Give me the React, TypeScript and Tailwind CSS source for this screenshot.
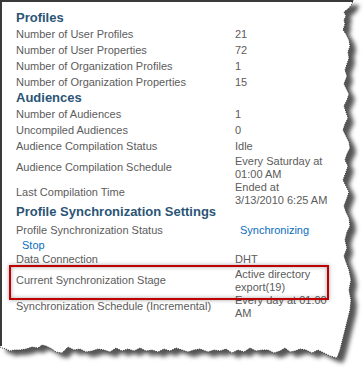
import React from "react";

const rightEdge: [number, number][] = [
  [353, 0], [352, 4], [349, 8], [344, 12], [346, 16], [344, 20], [345, 24], [343, 30], [346, 34], [349, 40], [350, 46], [348, 52], [349, 58], [347, 64], [345, 70], [347, 76], [344, 84], [346, 88], [349, 94], [347, 100], [344, 106], [346, 112], [348, 118], [345, 124], [343, 130], [346, 136], [349, 142], [350, 148], [347, 154], [345, 160], [348, 166], [346, 172], [343, 180], [346, 186], [349, 192], [347, 198], [344, 206], [346, 212], [349, 218], [350, 226], [347, 232], [345, 240], [347, 248], [344, 256], [346, 262], [349, 270], [351, 280], [349, 290], [351, 300], [350, 310], [348, 318], [346, 326], [344, 334], [342, 342], [340, 350], [337, 358],
];
const bottomEdge: [number, number][] = [
  [330, 356], [322, 352], [318, 350], [312, 353], [306, 350], [300, 349], [295, 351], [290, 352], [285, 348], [280, 351], [274, 353], [268, 350], [262, 350], [256, 351], [250, 348], [244, 352], [238, 350], [232, 353], [226, 349], [220, 351], [214, 350], [208, 352], [200, 349], [194, 350], [188, 352], [182, 350], [176, 348], [170, 351], [164, 349], [158, 352], [152, 350], [146, 351], [140, 348], [134, 351], [128, 349], [122, 351], [116, 348], [110, 352], [104, 350], [98, 349], [92, 351], [86, 352], [80, 349], [74, 350], [68, 347], [62, 353], [56, 352], [52, 349], [46, 346], [42, 345], [38, 348], [32, 347], [26, 349], [20, 350], [14, 350], [10, 351], [6, 349], [2, 348], [0, 347],
];

const pts = (a: [number, number][]) => a.map(([x, y]) => `${x},${y}`).join(" ");
const paper = `0,0 ${pts(rightEdge)} ${pts(bottomEdge)}`;
const torn = `${pts(rightEdge)} ${pts(bottomEdge)}`;

function Paper() {
  return (
    <svg className="absolute inset-0 z-0" width="364" height="368" viewBox="0 0 364 368">
      <defs>
        <filter id="blur" x="-10%" y="-10%" width="120%" height="120%">
          <feGaussianBlur stdDeviation="2.2" />
        </filter>
      </defs>
      <polygon points={paper} fill="#555555" transform="translate(6,5)" filter="url(#blur)" />
      <polygon points={paper} fill="#ffffff" />
      <polyline points={torn} fill="none" stroke="#333" strokeWidth="1" strokeDasharray="1 1.2" />
      <polyline points="1,346 1,1 353,1" fill="none" stroke="#3a3a3a" strokeWidth="2" />
    </svg>
  );
}

const font = { fontFamily: '"Liberation Sans", Arial, sans-serif' };

function Heading({ children, h }: { children: React.ReactNode; h: string }) {
  return (
    <div className={`${h} text-[13px] leading-[16px] font-bold text-[#2b5576] whitespace-nowrap`}>
      {children}
    </div>
  );
}

function Row({
  label,
  value,
  h = "h-[16px]",
  lpt = "pt-0",
  vpt = "pt-0",
  multi = false,
}: {
  label: React.ReactNode;
  value: React.ReactNode;
  h?: string;
  lpt?: string;
  vpt?: string;
  multi?: boolean;
}) {
  return (
    <div className={`flex ${h} text-[11px] text-[#5c5c5c] whitespace-nowrap`}>
      <div className={`w-[219px] shrink-0 leading-[16px] ${lpt}`}>{label}</div>
      <div className={`${multi ? "leading-[13px]" : "leading-[16px]"} ${vpt}`}>{value}</div>
    </div>
  );
}

export default function App() {
  return (
    <div className="relative w-[364px] h-[368px] bg-white overflow-hidden" style={font}>
      <Paper />
      <div className="relative z-10 pl-[16px] pt-[10px]">
        <Heading h="h-[16px]">Profiles</Heading>
        <Row label="Number of User Profiles" value="21" />
        <Row label="Number of User Properties" value="72" />
        <Row label="Number of Organization Profiles" value="1" />
        <Row label="Number of Organization Properties" value="15" />
        <Heading h="h-[16px]">Audiences</Heading>
        <Row label="Number of Audiences" value="1" />
        <Row label="Uncompiled Audiences" value="0" />
        <Row label="Audience Compilation Status" value="Idle" />
        <Row
          label="Audience Compilation Schedule"
          value={<>Every Saturday at<br />01:00 AM</>}
          h="h-[27px]"
          lpt="pt-[5px]"
          vpt="pt-[1px]"
          multi
        />
        <Row
          label="Last Compilation Time"
          value={<>Ended at<br />3/13/2010 6:25 AM</>}
          h="h-[23px]"
          lpt="pt-[3px]"
          multi
        />
        <Heading h="h-[18px]">Profile Synchronization Settings</Heading>
        <Row
          label="Profile Synchronization Status"
          value={<span className="pl-[5px] text-[#0a6dbd]">Synchronizing</span>}
          h="h-[15px]"
        />
        <div className="h-[14px] pl-[6px] text-[11px] leading-[16px] text-[#0a6dbd]">Stop</div>
        <Row label="Data Connection" value="DHT" h="h-[15px]" />
        <Row
          label="Current Synchronization Stage"
          value={<>Active directory<br />export(19)</>}
          h="h-[27px]"
          lpt="pt-[6px]"
          vpt="pt-[2px]"
          multi
        />
        <Row
          label="Synchronization Schedule (Incremental)"
          value={<>Every day at 01:00<br />AM</>}
          h="h-[30px]"
          lpt="pt-[5px]"
          vpt="pt-[1px]"
          multi
        />
      </div>
      <div className="absolute left-[9px] top-[265px] w-[320px] h-[35px] z-20 border-2 border-[#c00000] shadow-[0_0_4px_rgba(0,0,0,0.35),inset_0_0_4px_rgba(0,0,0,0.35)]" />
    </div>
  );
}
